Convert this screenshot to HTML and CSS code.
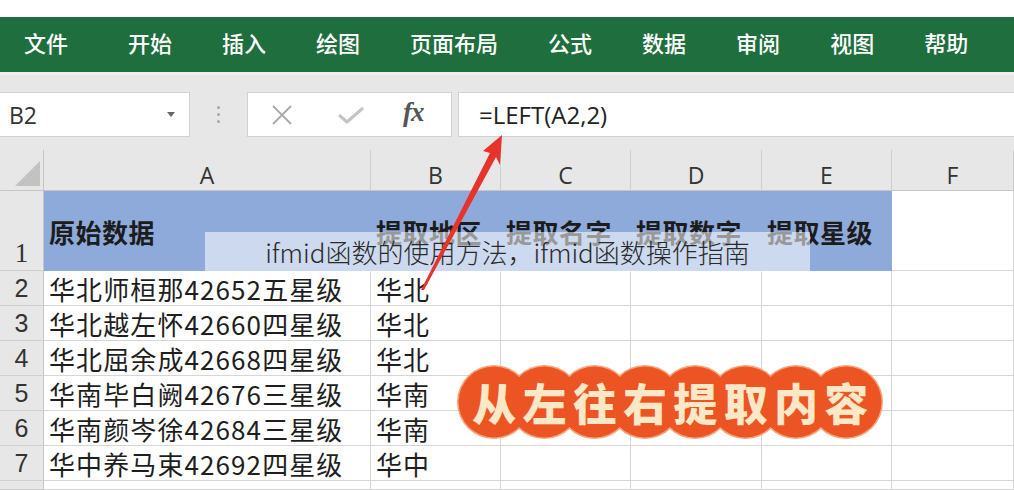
FILE: index.html
```html
<!DOCTYPE html>
<html lang="zh-CN">
<head>
<meta charset="utf-8">
<title>ifmid函数的使用方法</title>
<link rel="stylesheet" href="styles.css">
</head>
<body>
<div class="page">
  <div class="topgap"></div>
  <nav class="ribbon">
    <span class="tab first">文件</span>
    <span class="tab">开始</span>
    <span class="tab">插入</span>
    <span class="tab">绘图</span>
    <span class="tab">页面布局</span>
    <span class="tab">公式</span>
    <span class="tab">数据</span>
    <span class="tab">审阅</span>
    <span class="tab">视图</span>
    <span class="tab">帮助</span>
  </nav>
  <div class="fbar">
    <div class="namebox">
      <span class="ref">B2</span>
      <span class="caret"></span>
    </div>
    <div class="dots"><i></i><i></i><i></i></div>
    <div class="iconbox">
      <svg class="ico-x" width="22" height="22" viewBox="0 0 22 22"><path d="M2 2 L20 20 M20 2 L2 20" stroke="#a9a9a9" stroke-width="1.8" fill="none"/></svg>
      <svg class="ico-ok" width="28" height="18" viewBox="0 0 28 18"><path d="M2 9 L10 16 L26 2" stroke="#c4c4c4" stroke-width="3" fill="none" stroke-linejoin="round"/></svg>
      <span class="fx">fx</span>
    </div>
    <div class="formula">=LEFT(A2,2)</div>
  </div>
  <div class="sheet">
    <div class="corner"><span class="tri"></span></div>
    <div class="colhd">A</div>
    <div class="colhd">B</div>
    <div class="colhd">C</div>
    <div class="colhd">D</div>
    <div class="colhd">E</div>
    <div class="colhd">F</div>

    <div class="rowhd r1">1</div>
    <div class="cell hdr">原始数据</div>
    <div class="cell hdr">提取地区</div>
    <div class="cell hdr">提取名字</div>
    <div class="cell hdr">提取数字</div>
    <div class="cell hdr">提取星级</div>
    <div class="cell"></div>

    <div class="rowhd">2</div>
    <div class="cell">华北师桓那42652五星级</div>
    <div class="cell">华北</div>
    <div class="cell"></div><div class="cell"></div><div class="cell"></div><div class="cell"></div>

    <div class="rowhd">3</div>
    <div class="cell">华北越左怀42660四星级</div>
    <div class="cell">华北</div>
    <div class="cell"></div><div class="cell"></div><div class="cell"></div><div class="cell"></div>

    <div class="rowhd">4</div>
    <div class="cell">华北屈余成42668四星级</div>
    <div class="cell">华北</div>
    <div class="cell"></div><div class="cell"></div><div class="cell"></div><div class="cell"></div>

    <div class="rowhd">5</div>
    <div class="cell">华南毕白阙42676三星级</div>
    <div class="cell">华南</div>
    <div class="cell"></div><div class="cell"></div><div class="cell"></div><div class="cell"></div>

    <div class="rowhd">6</div>
    <div class="cell">华南颜岑徐42684三星级</div>
    <div class="cell">华南</div>
    <div class="cell"></div><div class="cell"></div><div class="cell"></div><div class="cell"></div>

    <div class="rowhd">7</div>
    <div class="cell">华中养马束42692四星级</div>
    <div class="cell">华中</div>
    <div class="cell"></div><div class="cell"></div><div class="cell"></div><div class="cell"></div>

    <div class="rowhd blank"></div>
    <div class="cell"></div><div class="cell"></div><div class="cell"></div><div class="cell"></div><div class="cell"></div><div class="cell"></div>
  </div>

  <div class="caption">ifmid函数的使用方法，ifmid函数操作指南</div>

  <svg class="arrow" width="1014" height="490" viewBox="0 0 1014 490">
    <polygon points="502,135 483,151 490,153 421,290 424,290 496,157 500,165" fill="#e8322c"/>
  </svg>

  <div class="badge">
    <svg class="badge-bg" width="426" height="74" viewBox="0 0 426 74">
      <g fill="#f6a47c">
        <circle cx="37" cy="37" r="37"/><circle cx="87.3" cy="37" r="37"/><circle cx="137.6" cy="37" r="37"/><circle cx="187.9" cy="37" r="37"/>
        <circle cx="238.1" cy="37" r="37"/><circle cx="288.4" cy="37" r="37"/><circle cx="338.7" cy="37" r="37"/><circle cx="389" cy="37" r="37"/>
      </g>
      <g fill="#ed5423">
        <circle cx="37" cy="37" r="35.5"/><circle cx="87.3" cy="37" r="35.5"/><circle cx="137.6" cy="37" r="35.5"/><circle cx="187.9" cy="37" r="35.5"/>
        <circle cx="238.1" cy="37" r="35.5"/><circle cx="288.4" cy="37" r="35.5"/><circle cx="338.7" cy="37" r="35.5"/><circle cx="389" cy="37" r="35.5"/>
      </g>
    </svg>
    <div class="badge-text">
      <span>从</span><span>左</span><span>往</span><span>右</span><span>提</span><span>取</span><span>内</span><span>容</span>
    </div>
  </div>
</div>
</body>
</html>
```
FILE: styles.css
```css
* { box-sizing: border-box; margin: 0; padding: 0; }
html, body { width: 1014px; height: 490px; overflow: hidden; background: #fff; }
body { font-family: "Noto Sans CJK SC", "Noto Sans", sans-serif; color: #222; }
.page { position: relative; width: 1014px; height: 490px; overflow: hidden; }
.topgap { height: 17px; background: #fff; }

.ribbon {
  height: 55px;
  background: #1f6e3e;
  display: flex;
  align-items: center;
  padding-left: 24px;
  padding-bottom: 6px;
  gap: 50px;
}
.tab {
  color: #fff;
  font-size: 22px;
  font-weight: 500;
  line-height: 1;
}
.tab.first { margin-right: 10px; }

.fbar {
  height: 78px;
  background: #e7e7e7;
  border-top: 3px solid #efefef;
  display: flex;
  align-items: flex-start;
  padding-top: 17px;
}
.namebox {
  width: 190px;
  height: 45px;
  background: #fff;
  border: 1px solid #d2d2d2;
  border-left: none;
  display: flex;
  align-items: center;
  justify-content: space-between;
  padding: 0 14px 0 9px;
  font-family: "Open Sans", "Noto Sans", sans-serif;
  font-size: 23px;
  color: #333;
}
.caret {
  width: 0; height: 0;
  border-left: 4px solid transparent;
  border-right: 4px solid transparent;
  border-top: 5px solid #666;
}
.dots {
  width: 57px;
  height: 45px;
  display: flex;
  flex-direction: column;
  align-items: center;
  justify-content: center;
  gap: 4px;
}
.dots i { display: block; width: 3px; height: 3px; border-radius: 50%; background: #a8a8a8; }
.iconbox {
  width: 205px;
  height: 45px;
  background: #fff;
  border: 1px solid #d2d2d2;
  display: flex;
  align-items: center;
  padding-left: 23px;
}
.ico-x { margin-right: 44px; }
.ico-ok { margin-right: 38px; }
.fx {
  font-family: "Liberation Serif", "DejaVu Serif", serif;
  font-style: italic;
  font-weight: 700;
  font-size: 27px;
  color: #555;
  letter-spacing: -1px;
  line-height: 1;
  margin-top: -4px;
}
.formula {
  margin-left: 6px;
  flex: 1;
  height: 45px;
  background: #fff;
  border: 1px solid #d2d2d2;
  border-right: none;
  display: flex;
  align-items: center;
  padding-left: 20px;
  font-family: "Open Sans", "Noto Sans", sans-serif;
  font-size: 24px;
  color: #222;
}

.sheet {
  display: grid;
  grid-template-columns: 44px 327px 130px 130px 131px 130px 122px;
  grid-template-rows: 41px 80px repeat(6, 35px) 9px;
}
.corner {
  background: #e7e7e7;
  border-right: 1px solid #c6c6c6;
  border-bottom: 1px solid #c6c6c6;
  position: relative;
}
.tri {
  position: absolute;
  left: 15px; top: 11px;
  width: 0; height: 0;
  border-left: 25px solid transparent;
  border-bottom: 25px solid #c2c2c2;
}
.colhd {
  background: #e7e7e7;
  border-right: 1px solid #cfcfcf;
  border-bottom: 1px solid #c6c6c6;
  display: flex;
  justify-content: center;
  align-items: center;
  padding-top: 10px;
  font-family: "Open Sans", "Noto Sans", sans-serif;
  font-size: 23px;
  line-height: 1;
  color: #333;
}
.rowhd {
  background: #e7e7e7;
  border-right: 1px solid #c6c6c6;
  border-bottom: 1px solid #d0d0d0;
  display: flex;
  justify-content: center;
  align-items: center;
  font-family: "Liberation Sans", "Noto Sans", sans-serif;
  font-size: 25px;
  line-height: 1;
  color: #333;
}
.rowhd.r1 {
  align-items: flex-end;
  padding-bottom: 3px;
  font-family: "Liberation Serif", serif;
  font-size: 27px;
}
.cell {
  border-right: 1px solid #d6d6d6;
  border-bottom: 1px solid #d6d6d6;
  display: flex;
  align-items: center;
  padding: 2px 0 0 5px;
  font-size: 26px;
  line-height: 1.1;
  letter-spacing: 1.1px;
  color: #1e1e1e;
  white-space: nowrap;
}
.cell.hdr {
  background: #8eaadb;
  border-right-color: #8eaadb;
  border-bottom-color: #8eaadb;
  font-weight: 700;
  letter-spacing: 0.5px;
  padding-top: 4px;
  padding-bottom: 0;
  color: #1c1c1c;
}

.caption {
  position: absolute;
  left: 205px; top: 232px;
  width: 605px; height: 40px;
  background: rgba(255,255,255,0.55);
  display: flex;
  align-items: center;
  justify-content: center;
  font-size: 26px;
  font-weight: 300;
  line-height: 1;
  color: #2a2a2a;
  white-space: nowrap;
}
.arrow { position: absolute; left: 0; top: 0; pointer-events: none; }

.badge {
  position: absolute;
  left: 457px; top: 365px;
  width: 426px; height: 74px;
}
.badge-bg { position: absolute; left: 0; top: 0; }
.badge-text {
  position: absolute;
  left: 12px; top: 0;
  height: 74px;
  display: flex;
  align-items: center;
}
.badge-text span {
  width: 50.3px;
  text-align: center;
  font-size: 44px;
  font-weight: 900;
  color: #fce7c6;
  line-height: 1;
}
```
